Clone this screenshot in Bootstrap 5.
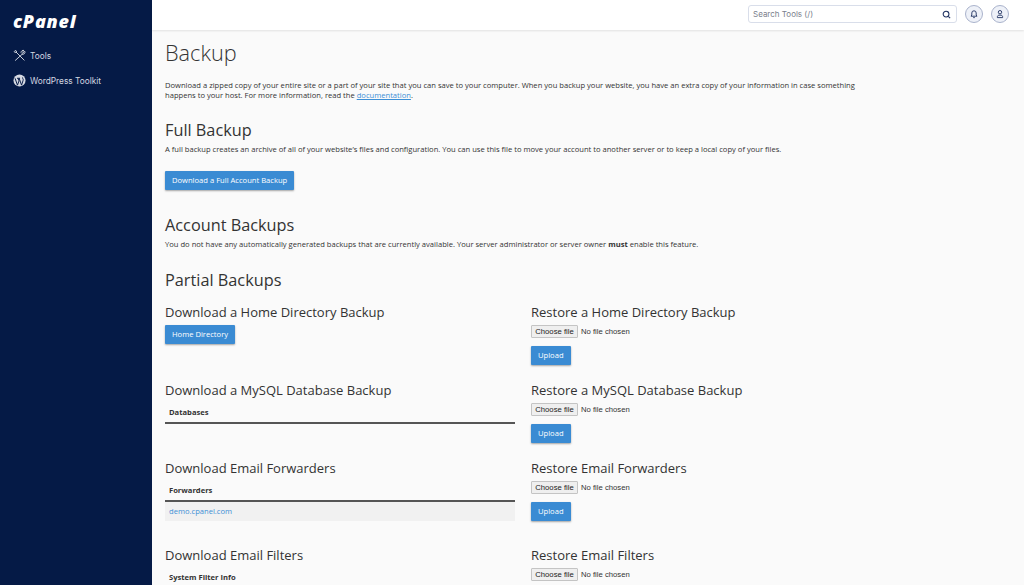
<!DOCTYPE html>
<html lang="en">
<head>
<meta charset="utf-8">
<title>Backup</title>
<link href="https://cdn.jsdelivr.net/npm/bootstrap@5.3.0/dist/css/bootstrap.min.css" rel="stylesheet">
<style>
html,body{height:585px;overflow:hidden}
body{font-family:"Open Sans","Liberation Sans",sans-serif;font-size:7.6px;line-height:10px;color:#333;background:#fafafa}
.side{width:152px;height:585px;background:#051a46;color:#d5d9e2;flex:none}
.logo-word{font-family:"Open Sans","Liberation Sans",sans-serif;font-weight:800;font-style:italic;font-size:18px;line-height:22px;color:#fff;letter-spacing:.8px;padding:10px 0 0 13px;height:43px}
.side-link{height:25px;padding-left:13px;font-family:"Inter","Liberation Sans",sans-serif;font-size:8.3px;color:#d5d9e2;text-decoration:none;gap:4px}
.side-link svg{width:13px;height:13px;flex:none}
.main-col{min-width:0}
.topbar{height:30px;background:#fff;box-shadow:0 1px 2px rgba(0,0,0,.1);padding-right:15px;padding-bottom:2px;gap:8px}
.searchbox{width:209px;height:18px;border:1px solid #d9deea;border-radius:3px;padding:0 5px 0 4px;font-family:"Inter","Liberation Sans",sans-serif;font-size:8px;color:#7a808c;background:#fff}
.roundbtn{width:18px;height:18px;border-radius:50%;border:1px solid #aab3cc;background:#eef1f8;color:#1d2f5f}
.page{width:716px;margin-left:13px}
.ttl{font-size:21.7px;line-height:30px;font-weight:300;color:#333;margin:8px 0 12px}
.sect{font-size:16.3px;line-height:20px;font-weight:400;color:#333;margin:0 0 4px}
.sub{font-size:13px;line-height:18px;font-weight:400;color:#333;margin:0 0 4px}
.intro{margin:0}
.lead-gap{margin-bottom:20px}
.intro a,.cellink{color:#3d8fd6}
.cellink{text-decoration:none}
.actbtn{display:block;font-size:7.6px;line-height:11px;padding:4px 7px;background:#3a8bd3;color:#fff;border:0;border-radius:1px;box-shadow:0 1px 2px rgba(0,0,0,.35);height:19px}
.actbtn:hover{background:#3a8bd3;color:#fff}
.big-gap{margin:17px 0 25px}
.part-head{margin-top:21px;margin-bottom:13px}
.up-gap{margin-top:8px}
.filepick{display:flex;align-items:center;height:13px;font-family:"Liberation Sans",sans-serif;font-size:7.7px;color:#333;margin:0;gap:3px}
.filepick input{display:none}
.pickbtn{display:block;width:47px;height:13px;line-height:11px;text-align:center;background:#efefef;border:1px solid #c4c4c4;border-radius:1px;color:#222}
.rowgrid{display:grid;grid-template-columns:350px 350px;column-gap:16px}
.blk{height:78px}
.blk-tall{height:87px}
.mintable{width:100%;margin:0;font-size:7.6px}
.mintable th{font-weight:700;color:#333;padding:4px 4px 5px;height:20px;border-bottom:2px solid #555;line-height:10px}
.mintable td{background:#f1f1f1;padding:4px 4px 5px;height:19px;line-height:10px}
</style>
</head>
<body>
<div class="d-flex">
  <nav class="side d-flex flex-column">
    <div class="logo-word">cPanel</div>
    <a class="side-link d-flex align-items-center" href="#">
      <svg viewBox="0 0 14 14" fill="none" stroke="#d5d9e2" stroke-width="1" stroke-linecap="round"><path d="M3.4 3.4 12 12M1.5 2.5l1-1 1.3.8-.1 1.2-1.2.1zM10.6 5 2.6 12.2M8.6 3.6a2.3 2.3 0 0 1 3.2-2l-1.6 1.5.9.9 1.6-1.5a2.3 2.3 0 0 1-3.1 3"/></svg>
      <span>Tools</span>
    </a>
    <a class="side-link d-flex align-items-center" href="#">
      <svg viewBox="0 0 14 14"><circle cx="7" cy="7" r="6.5" fill="#d5d9e2"/><path d="M2.2 4.6 4.8 12l1.7-4.6L5.3 4.6M4.4 4.6h3.2M6.6 4.6 9.2 12l1.6-4.8c.4-1.1.2-1.9-.5-2.6M9.8 4.3a1 1 0 0 1 1-.1" fill="none" stroke="#051a46" stroke-width="1.05"/></svg>
      <span>WordPress Toolkit</span>
    </a>
  </nav>
  <div class="main-col flex-grow-1">
    <header class="topbar d-flex align-items-center justify-content-end">
      <div class="searchbox d-flex align-items-center justify-content-between">
        <span>Search Tools (/)</span>
        <svg width="9" height="9" viewBox="0 0 10 10" fill="none" stroke="#1d2f5f" stroke-width="1.2"><circle cx="4.5" cy="4.5" r="3.2"/><path d="M7 7l2 2"/></svg>
      </div>
      <div class="roundbtn d-flex align-items-center justify-content-center">
        <svg width="10" height="10" viewBox="0 0 10 10" fill="none" stroke="#1d2f5f" stroke-width=".9"><path d="M2 7.2h6L7.2 6V4a2.2 2.2 0 0 0-4.4 0v2zM4.2 8.6h1.6"/></svg>
      </div>
      <div class="roundbtn d-flex align-items-center justify-content-center">
        <svg width="10" height="10" viewBox="0 0 10 10" fill="none" stroke="#1d2f5f" stroke-width=".9"><circle cx="5" cy="3.2" r="1.7"/><path d="M2.4 8.6V7.6c0-.8.8-1.4 1.6-1.4h2c.8 0 1.6.6 1.6 1.4v1z"/></svg>
      </div>
    </header>
    <main class="page">
      <h1 class="ttl">Backup</h1>
      <p class="intro lead-gap">Download a zipped copy of your entire site or a part of your site that you can save to your computer. When you backup your website, you have an extra copy of your information in case something happens to your host. For more information, read the <a href="#">documentation</a>.</p>
      <h2 class="sect">Full Backup</h2>
      <p class="intro">A full backup creates an archive of all of your website’s files and configuration. You can use this file to move your account to another server or to keep a local copy of your files.</p>
      <button class="btn actbtn big-gap">Download a Full Account Backup</button>
      <h2 class="sect">Account Backups</h2>
      <p class="intro">You do not have any automatically generated backups that are currently available. Your server administrator or server owner <strong>must</strong> enable this feature.</p>
      <h2 class="sect part-head">Partial Backups</h2>
      <div class="rowgrid">
        <div class="blk"><h3 class="sub">Download a Home Directory Backup</h3><button class="btn actbtn">Home Directory</button></div>
        <div class="blk"><h3 class="sub">Restore a Home Directory Backup</h3><label class="filepick"><input type="file"><span class="pickbtn">Choose file</span><span>No file chosen</span></label><button class="btn actbtn up-gap">Upload</button></div>
        <div class="blk"><h3 class="sub">Download a MySQL Database Backup</h3><table class="mintable"><thead><tr><th>Databases</th></tr></thead></table></div>
        <div class="blk"><h3 class="sub">Restore a MySQL Database Backup</h3><label class="filepick"><input type="file"><span class="pickbtn">Choose file</span><span>No file chosen</span></label><button class="btn actbtn up-gap">Upload</button></div>
        <div class="blk-tall"><h3 class="sub">Download Email Forwarders</h3><table class="mintable"><thead><tr><th>Forwarders</th></tr></thead><tbody><tr><td><a class="cellink" href="#">demo.cpanel.com</a></td></tr></tbody></table></div>
        <div class="blk-tall"><h3 class="sub">Restore Email Forwarders</h3><label class="filepick"><input type="file"><span class="pickbtn">Choose file</span><span>No file chosen</span></label><button class="btn actbtn up-gap">Upload</button></div>
        <div class="blk"><h3 class="sub">Download Email Filters</h3><table class="mintable"><thead><tr><th>System Filter Info</th></tr></thead></table></div>
        <div class="blk"><h3 class="sub">Restore Email Filters</h3><label class="filepick"><input type="file"><span class="pickbtn">Choose file</span><span>No file chosen</span></label></div>
      </div>
    </main>
  </div>
</div>
<script src="https://cdn.jsdelivr.net/npm/bootstrap@5.3.0/dist/js/bootstrap.bundle.min.js"></script>
</body>
</html>
